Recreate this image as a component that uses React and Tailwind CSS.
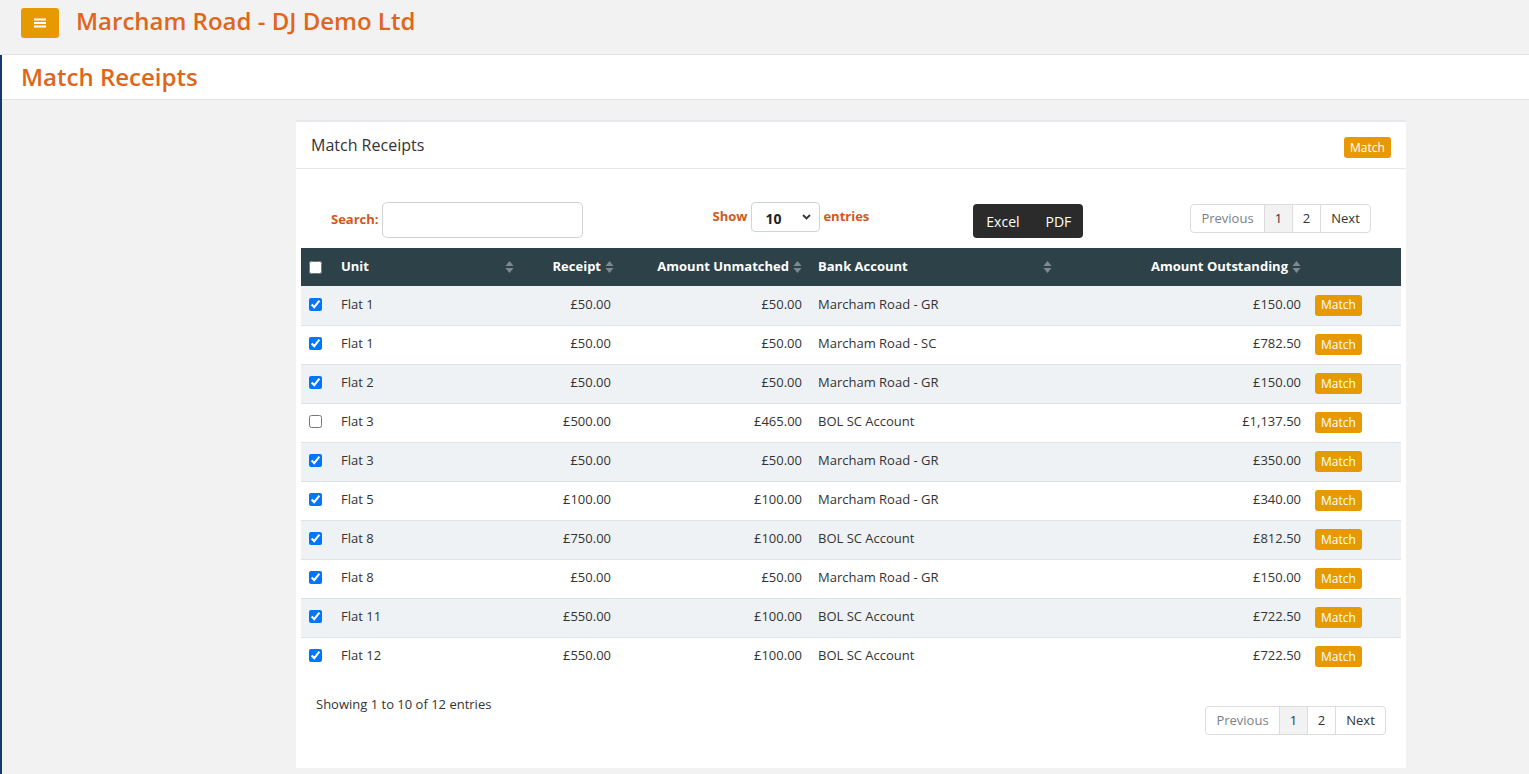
import React from "react";

const rows = [
  ["Flat 1", "£50.00", "£50.00", "Marcham Road - GR", "£150.00", true],
  ["Flat 1", "£50.00", "£50.00", "Marcham Road - SC", "£782.50", true],
  ["Flat 2", "£50.00", "£50.00", "Marcham Road - GR", "£150.00", true],
  ["Flat 3", "£500.00", "£465.00", "BOL SC Account", "£1,137.50", false],
  ["Flat 3", "£50.00", "£50.00", "Marcham Road - GR", "£350.00", true],
  ["Flat 5", "£100.00", "£100.00", "Marcham Road - GR", "£340.00", true],
  ["Flat 8", "£750.00", "£100.00", "BOL SC Account", "£812.50", true],
  ["Flat 8", "£50.00", "£50.00", "Marcham Road - GR", "£150.00", true],
  ["Flat 11", "£550.00", "£100.00", "BOL SC Account", "£722.50", true],
  ["Flat 12", "£550.00", "£100.00", "BOL SC Account", "£722.50", true],
];

function SortIcon() {
  return (
    <svg width="9" height="14" viewBox="0 0 9 14" className="shrink-0">
      <path d="M4.5 1 L8.5 6 L0.5 6 Z" fill="#7c8b92" />
      <path d="M4.5 13 L8.5 8 L0.5 8 Z" fill="#7c8b92" />
    </svg>
  );
}

function MatchBtn() {
  return (
    <span className="inline-flex h-[21px] w-[47px] items-center justify-center rounded-[3px] bg-[#e69a00] text-[12px] leading-none text-white">
      Match
    </span>
  );
}

function Pager() {
  return (
    <div className="flex h-[29px] overflow-hidden rounded-[4px] border border-[#dcdcdc] text-[13px]">
      <div className="flex w-[73px] items-center justify-center text-[#7b8187]">Previous</div>
      <div className="flex w-[28px] items-center justify-center border-l border-[#dcdcdc] bg-[#f2f2f2] text-[#333]">1</div>
      <div className="flex w-[28px] items-center justify-center border-l border-[#dcdcdc] text-[#333]">2</div>
      <div className="flex w-[50px] items-center justify-center border-l border-[#dcdcdc] text-[#333]">Next</div>
    </div>
  );
}

export default function App() {
  return (
    <div
      className="min-h-[774px] bg-[#f2f2f2] text-[#333]"
      style={{ fontFamily: "'Open Sans', 'Noto Sans', sans-serif" }}
    >
      {/* top bar */}
      <div className="flex h-[55px] items-start border-b border-[#e2e2e2] bg-[#f2f2f2] pl-[21px] pt-[8px]">
        <div className="flex h-[30px] w-[38px] items-center justify-center rounded-[3px] bg-[#e69a00]">
          <svg width="12" height="10" viewBox="0 0 12 10">
            <rect x="0" y="0.5" width="12" height="2" fill="#fff" />
            <rect x="0" y="4" width="12" height="2" fill="#fff" />
            <rect x="0" y="7.5" width="12" height="2" fill="#fff" />
          </svg>
        </div>
        <div className="ml-[17px] mt-[-5px] text-[24px] font-semibold leading-[36px] text-[#e0661b]">
          Marcham Road - DJ Demo Ltd
        </div>
      </div>

      <div className="min-h-[719px] border-l-2 border-[#17396a]">
        {/* page title */}
        <div className="flex h-[45px] items-center border-b border-[#e4e4e4] bg-white pl-[19px]">
          <div className="mt-[-1px] text-[24px] font-semibold leading-none text-[#e0661b]">Match Receipts</div>
        </div>

        {/* card */}
        <div className="ml-[294px] mt-[20px] w-[1110px] border-t-2 border-[#e6e8eb] bg-white">
          <div className="flex h-[47px] items-center justify-between border-b border-[#e3e6ea] pl-[15px] pr-[15px]">
            <div className="text-[16px] leading-none text-[#333]">Match Receipts</div>
            <div className="mt-[2px]">
              <MatchBtn />
            </div>
          </div>

          <div className="px-[5px] pb-[33px]">
            {/* toolbar */}
            <div className="mt-[33px] flex h-[36px] items-center">
              <div className="ml-[30px] flex items-center">
                <span className="text-[13px] font-bold text-[#d2581c]">Search:</span>
                <div className="ml-[3px] h-[36px] w-[201px] rounded-[5px] border border-[#ced4da] bg-white" />
              </div>
              <div className="ml-[130px] mt-[-6px] flex items-center">
                <span className="text-[13px] font-bold text-[#d2581c]">Show</span>
                <div className="ml-[4px] flex h-[30px] w-[69px] items-center justify-between rounded-[4px] border border-[#ced4da] pl-[13px] pr-[8px]">
                  <span className="mt-[2px] text-[14px] font-bold text-[#222]">10</span>
                  <svg width="9" height="6" viewBox="0 0 9 6">
                    <path d="M1 1 L4.5 4.5 L8 1" fill="none" stroke="#333" strokeWidth="1.8" />
                  </svg>
                </div>
                <span className="ml-[3px] text-[13px] font-bold text-[#d2581c]">entries</span>
              </div>
              <div className="ml-[104px] mt-[2px] flex h-[34px] w-[110px] items-center rounded-[4px] bg-[#2b2b2b] text-[14px] text-white">
                <span className="ml-[13px]">Excel</span>
                <span className="ml-[26px]">PDF</span>
              </div>
              <div className="ml-auto mr-[30px] mt-[-3px]">
                <Pager />
              </div>
            </div>

            {/* table */}
            <table className="mt-[10px] w-[1100px] table-fixed border-collapse text-[13px]">
              <colgroup>
                <col className="w-[32px]" />
                <col className="w-[188px]" />
                <col className="w-[98px]" />
                <col className="w-[191px]" />
                <col className="w-[250px]" />
                <col className="w-[249px]" />
                <col className="w-[92px]" />
              </colgroup>
              <thead>
                <tr className="h-[38px] bg-[#2d4149] font-bold text-white">
                  <th className="pl-[8px] text-left align-middle">
                    <input type="checkbox" className="block h-[13px] w-[13px]" readOnly />
                  </th>
                  <th className="pl-[8px] pr-[7px]">
                    <div className="flex items-center justify-between">
                      <span>Unit</span>
                      <SortIcon />
                    </div>
                  </th>
                  <th className="pr-[5px]">
                    <div className="flex items-center justify-end gap-[4px]">
                      <span>Receipt</span>
                      <SortIcon />
                    </div>
                  </th>
                  <th className="pr-[8px]">
                    <div className="flex items-center justify-end gap-[4px]">
                      <span>Amount Unmatched</span>
                      <SortIcon />
                    </div>
                  </th>
                  <th className="pl-[8px] pr-[8px]">
                    <div className="flex items-center justify-between">
                      <span>Bank Account</span>
                      <SortIcon />
                    </div>
                  </th>
                  <th className="pr-[8px]">
                    <div className="flex items-center justify-end gap-[4px]">
                      <span>Amount Outstanding</span>
                      <SortIcon />
                    </div>
                  </th>
                  <th></th>
                </tr>
              </thead>
              <tbody>
                {rows.map((r, i) => (
                  <tr
                    key={i}
                    className={`h-[39px] ${i > 0 ? "border-t border-[#dee2e6]" : ""} ${i % 2 === 0 ? "bg-[#eff2f5]" : "bg-white"}`}
                  >
                    <td className="pb-[2px] pl-[8px] align-middle">
                      <input type="checkbox" defaultChecked={r[5]} className="block h-[13px] w-[13px] accent-[#0075ff]" />
                    </td>
                    <td className="pb-[2px] pl-[8px] text-[#333]">{r[0]}</td>
                    <td className="pb-[2px] pr-[8px] text-right text-[#333]">{r[1]}</td>
                    <td className="pb-[2px] pr-[8px] text-right text-[#333]">{r[2]}</td>
                    <td className="pb-[2px] pl-[8px] text-[#333]">{r[3]}</td>
                    <td className="pb-[2px] pr-[8px] text-right text-[#333]">{r[4]}</td>
                    <td className="pl-[6px]">
                      <MatchBtn />
                    </td>
                  </tr>
                ))}
              </tbody>
            </table>

            {/* footer */}
            <div className="flex items-start justify-between px-[15px]">
              <div className="mt-[19px] text-[13px] leading-[18px] text-[#333]">Showing 1 to 10 of 12 entries</div>
              <div className="mt-[30px]">
                <Pager />
              </div>
            </div>
          </div>
        </div>
      </div>
    </div>
  );
}
